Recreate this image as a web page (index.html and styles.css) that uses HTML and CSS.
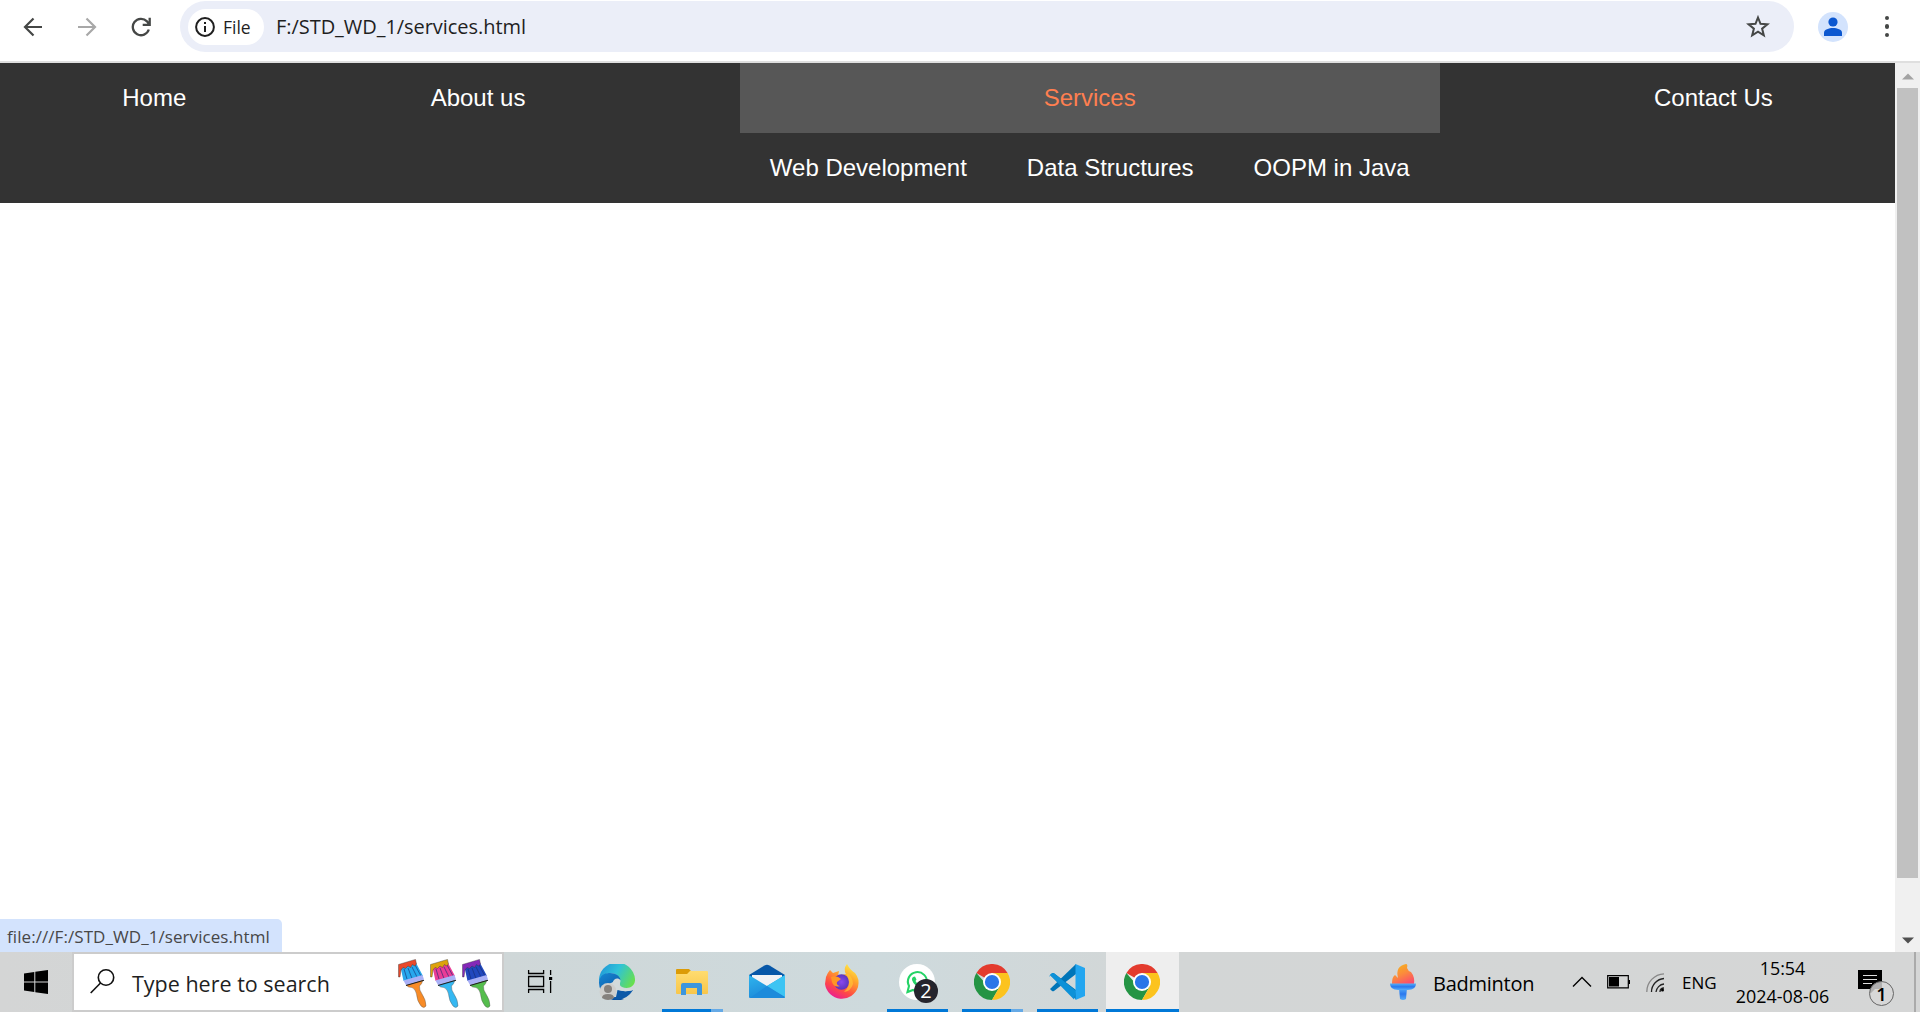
FILE: index.html
```html
<!DOCTYPE html>
<html lang="en">
<head>
<meta charset="utf-8">
<title>Services</title>
<link rel="stylesheet" href="styles.css">
</head>
<body>
<svg class="defs" width="0" height="0" aria-hidden="true">
  <defs>
    <linearGradient id="edgeTop" x1="0" y1="0.3" x2="1" y2="0.7"><stop offset="0" stop-color="#2298d8"/><stop offset=".45" stop-color="#2fc2d8"/><stop offset="1" stop-color="#68e04c"/></linearGradient>
    <linearGradient id="edgeMid" x1="0" y1="0" x2="0.6" y2="1"><stop offset="0" stop-color="#1688d4"/><stop offset="1" stop-color="#0a4f9e"/></linearGradient>
    <linearGradient id="folder" x1="0" y1="0" x2="0" y2="1"><stop offset="0" stop-color="#ffdc70"/><stop offset="1" stop-color="#f8c64a"/></linearGradient>
    <linearGradient id="mail" x1="0" y1="0" x2="0.5" y2="1"><stop offset="0" stop-color="#2fb5ee"/><stop offset="1" stop-color="#1c87d8"/></linearGradient>
    <linearGradient id="fox" x1="0.8" y1="0" x2="0.25" y2="1"><stop offset="0" stop-color="#fff04a"/><stop offset=".35" stop-color="#ffa42b"/><stop offset=".7" stop-color="#ff4b44"/><stop offset="1" stop-color="#e8189a"/></linearGradient>
    <radialGradient id="globe"><stop offset="0" stop-color="#8a48ef"/><stop offset="1" stop-color="#5b36bd"/></radialGradient>
    <linearGradient id="flame" x1="0.2" y1="0" x2="0.7" y2="1"><stop offset="0" stop-color="#f6b41c"/><stop offset=".5" stop-color="#fb8b3c"/><stop offset="1" stop-color="#fb4d6b"/></linearGradient>
    <linearGradient id="torch" x1="0" y1="0" x2="0" y2="1"><stop offset="0" stop-color="#55b0f7"/><stop offset=".5" stop-color="#2a78ee"/><stop offset="1" stop-color="#58aef8"/></linearGradient>
    <symbol id="chrome" viewBox="0 0 36 36">
      <path d="M18 18 2.400 9A18 18 0 0 1 33.600 9z" fill="#e33b2e"/>
      <path d="M18 18H10.200L2.400 9A18 18 0 0 0 18 36l7.800-13.500z" fill="#249444"/>
      <path d="M18 9H33.600A18 18 0 0 1 18 36l7.800-13.500z" fill="#fcc31e"/>
      <circle cx="18" cy="18" r="9" fill="#fff"/><circle cx="18" cy="18" r="7.100" fill="#2a76e8"/>
    </symbol>
    <symbol id="brush" viewBox="0 0 30 50">
      <path d="M8 26 25 21Q24 25 21.500 27 21 31 24 35 28 41 28 47 26 50 23 47 19 42 18.500 35 17.500 30 14 28.500 10 28.500 8 26z" class="handle" stroke="#555" stroke-width=".4"/>
      <path d="M2.500 8 17.500 3 25 17 5.500 22z" class="bristle"/>
      <path d="M6 10 9 20M10 9l4 10.500M14 8l5 10M17 6l6 11" stroke="#172c72" stroke-width="1" opacity=".6"/>
      <path d="M5.500 21.500 24.500 16 26 20.500 8 26z" fill="#a9b0f6"/><path d="M8 26.500 26 21.300" stroke="#222" stroke-width="1.100"/>
      <path d="M.5 5.500 17.500.4 18.500 5 16.500 7 14.500 5.500 12.500 8.500 10 7 7.500 9.500 5 8.500 3 11 2 18H.5z" class="paint"/>
    </symbol>
  </defs>
</svg>

<header class="toolbar">
  <svg class="tool back" viewBox="0 0 20 20" fill="none" stroke="#454746" stroke-width="2.200"><path d="M19 10H2M10.500 1.500 2 10l8.500 8.500"/></svg>
  <svg class="tool forward" viewBox="0 0 20 20" fill="none" stroke="#a8a8a8" stroke-width="2.200"><path d="M1 10h17M9.500 1.500 18 10l-8.500 8.500"/></svg>
  <svg class="tool reload" viewBox="0 0 20 20" fill="none" stroke="#454746" stroke-width="2.300"><path d="M17.800 12.500A8.200 8.200 0 1 1 16 4.400L18 7M18.700 .8v7h-7"/></svg>
  <div class="omnibox">
    <div class="chip">
      <svg width="20" height="20" viewBox="0 0 20 20"><circle cx="10" cy="10" r="8.900" fill="none" stroke="#1f1f1f" stroke-width="2"/><path d="M9 9h2v6H9zM9 5h2v2H9z" fill="#1f1f1f"/></svg>
      <span>File</span>
    </div>
    <span class="url">F:/STD_WD_1/services.html</span>
    <svg class="star" width="24" height="23" viewBox="0 0 24 23"><path d="m12 2.500 2.500 6.300 6.900.5-5.300 4.300 1.700 6.700-5.800-3.700-5.800 3.700 1.700-6.700-5.300-4.300 6.900-.5z" fill="none" stroke="#454746" stroke-width="2"/></svg>
  </div>
  <div class="avatar"><svg width="20" height="20" viewBox="0 0 20 20" fill="#0b57d0"><circle cx="10" cy="5" r="4.600"/><path d="M1 19v-3.500C1 12.500 6 11 10 11s9 1.500 9 4.500V19z"/></svg></div>
  <div class="dots"><i></i><i></i><i></i></div>
</header>

<main class="viewport">
  <div class="page">
    <ul class="menu">
      <li><a>Home</a></li>
      <li><a>About us</a></li>
      <li><a class="active">Services</a>
        <ul class="submenu"><li><a>Web Development</a></li><li><a>Data Structures</a></li><li><a>OOPM in Java</a></li></ul>
      </li>
      <li><a>Contact Us</a></li>
    </ul>
  </div>
  <div class="scrollbar">
    <svg width="12" height="7" viewBox="0 0 12 7"><path d="M0 6.500 6 .5l6 6z" fill="#a3a3a3"/></svg>
    <div class="thumb"></div>
    <svg width="12" height="7" viewBox="0 0 12 7"><path d="M0 .5h12l-6 6z" fill="#505050"/></svg>
  </div>
  <div class="status">file:///F:/STD_WD_1/services.html</div>
</main>

<footer class="taskbar">
  <div class="start"><svg width="24" height="24" viewBox="0 0 24 24"><path d="M0 3.400 10.300 2v9.500H0zM11.300 1.800 24 0v11.500H11.300zM0 12.500h10.300V22L0 20.600zM11.300 12.500H24V24l-12.700-1.800z"/></svg></div>
  <div class="search">
    <svg class="lens" width="25" height="25" viewBox="0 0 25 25" fill="none" stroke="#111" stroke-width="1.600"><circle cx="16" cy="8.500" r="7.700"/><path d="M10.500 14 .7 24"/></svg>
    <span class="prompt">Type here to search</span>
    <div class="brushes">
      <svg class="orange"><use href="#brush"/></svg><svg class="sky"><use href="#brush"/></svg><svg class="green"><use href="#brush"/></svg>
    </div>
  </div>
  <div class="apps">
    <div class="app"><svg class="taskview" viewBox="0 0 36 36" fill="none" stroke="#000" stroke-width="1.300"><path d="M4.600 6v3.500h15V6M4.600 29v-3.500h15V29M4.600 12.500h15v10h-15zM26.600 6v5M26.600 17v12"/><path d="M25 13h3.200v3H25z" fill="#000" stroke="none"/></svg></div>
    <div class="app"><svg viewBox="0 0 36 36">
      <path d="M0 18A18 18 0 0 1 36 15C36.500 23 29 25.500 23 23C20 21.500 21 20 21.500 17C21 12 16 8.500 10 9Q3 10 0 18z" fill="url(#edgeTop)"/>
      <path d="M0 18C1 11 6 8.500 11 9C17 9 21 12 21.500 16Q17 13 14 18C11 25 17 32 25 35A18 18 0 0 1 0 18z" fill="url(#edgeMid)"/>
      <path d="M15 19C15 26 24 29 34 26C30 33 22 37 15 35Q10 27 15 19z" fill="#0c59a8"/>
      <path d="M10 20Q12 19 14 18Q15 14 19 14.500Q21.500 15.500 21 18Q19.500 21 21 23Q26 26 33.500 24.500L33 26.500Q25 28 18.500 26L17 33H9z" fill="#d2dadb"/>
      <circle cx="9" cy="27.500" r="8.500" fill="#cfcfcd"/><circle cx="9" cy="25" r="4" fill="#85817d"/><path d="M3 34q0-4 6-4t6 4q-6 4-12 0z" fill="#85817d"/>
    </svg></div>
    <div class="app"><svg viewBox="0 0 36 36"><path d="M2 6q0-1 1-1h12l2 2-2 4H2z" fill="#dc9b06"/><path d="M2 10h11l3-3h17q1 0 1 1v21q0 1-1 1H3q-1 0-1-1z" fill="url(#folder)"/><path d="M7 31V21q0-2 2-2h17q2 0 2 2v10h-5v-7H12v7z" fill="#3c96de"/></svg><div class="bar"></div><div class="bar more"></div></div>
    <div class="app"><svg viewBox="0 0 36 36"><path d="M0 11 15.500 1.500q2.500-1.500 5 0L36 11v8H0z" fill="#0757a8"/><path d="M3 11h30v8L18 25 3 19z" fill="#f1f2f5"/><path d="M0 11 18 22 36 11v22q0 1-1 1H1q-1 0-1-1z" fill="url(#mail)"/><path d="M18 22 36 11v22z" fill="#3dc4f3"/><path d="m18 22 18 12H1z" fill="#1d8bdb"/></svg></div>
    <div class="app"><svg viewBox="0 0 36 36"><path d="M2 13Q4 8 6 6L9 9 15 7 14 12 22 10Q19 5 23 0Q26 6 31 9Q36 15 34 23A17 17 0 0 1 1 20z" fill="url(#fox)"/><circle cx="17.500" cy="18" r="7.700" fill="url(#globe)"/><path d="M7 13Q13 11 17 15L13 18Q12 21 16 22Q10 24 8 18z" fill="#ff9625"/><path d="M22 9Q29 12 29 20Q27 27 20 28Q27 22 24 14z" fill="#ffca35" opacity=".65"/></svg></div>
    <div class="app"><svg viewBox="0 0 40 40" class="whats"><circle cx="18" cy="18" r="18" fill="#fff"/><path d="m8.500 28 1.500-6A9.500 9.500 0 1 1 14 26z" fill="none" stroke="#24d366" stroke-width="2.100"/><path d="m14 13 2-.5 1.500 3-1 1.500q1.500 3 4 4l2-1.500 3 1.500q-1 3-3.500 3-7-2-9-8-.300-2 1-3z" fill="#24d366"/></svg><span class="count">2</span><div class="bar"></div></div>
    <div class="app"><svg><use href="#chrome"/></svg><div class="bar"></div><div class="bar more"></div></div>
    <div class="app"><svg viewBox="0 0 36 36"><path d="M1 11 3 9.200Q4 8.700 5 9.200L27 26v9.500Z" fill="#0075b8"/><path d="M1 25l2 2q1 .5 2 0L27 10V0Z" fill="#0075b8"/><path d="M1 11 25 35.500 27 27 5 9.300Q4 8.600 3 9.300L1 11Q0 12 1 13z" fill="#0d91d8"/><path d="M26.500 0 36 4v28l-9.500 4z" fill="#23a6f0"/></svg><div class="bar"></div></div>
    <div class="app current"><svg><use href="#chrome"/></svg><div class="bar"></div></div>
  </div>
  <div class="tray">
    <svg width="26" height="36" viewBox="0 0 26 36"><path d="M2 19Q2 13 5 11L8 14Q5 2 16 0Q18 0 17 4Q18 7 21 8Q25 13 24 20H2z" fill="url(#flame)"/><path d="M9 24h8l-1 11q-3 2-6 0z" fill="url(#torch)"/><path d="M0 19.500h26Q26 26 18 26H8Q0 26 0 19.500z" fill="url(#torch)"/></svg>
    <span class="news">Badminton</span>
    <svg class="up" width="20" height="12" viewBox="0 0 20 12"><path d="m1 10.500 9-9 9 9" fill="none" stroke="#000" stroke-width="1.400"/></svg>
    <svg class="battery" width="24" height="14" viewBox="0 0 24 14"><path d="M.7.700h20.600v12.100H.7z" fill="none" stroke="#000" stroke-width="1.200"/><path d="M2 2h10v9.500H2zM21.500 5H23v4h-1.500z"/></svg>
    <svg class="wifi" width="19" height="19" viewBox="0 0 19 19" fill="none" stroke="#222" stroke-width="1.300"><path d="M.8 19A18 18 0 0 1 18 .8" stroke="#888"/><path d="M5.500 19A13.500 13.500 0 0 1 18 5.500M10 19a9 9 0 0 1 8-8M14 19q0-4 4-4"/><circle cx="16.500" cy="17" r="1.500" fill="#000" stroke="none"/></svg>
    <span class="lang">ENG</span>
    <div class="clock"><span>15:54</span><span class="date">2024-08-06</span></div>
    <div class="notice"><svg width="24" height="25" viewBox="0 0 24 25"><path d="M0 0h24v19h-7l-5 5v-5H0z"/><path d="M5 5.500h14M5 9.500h14M5 13.500h9" stroke="#ddd" stroke-width="1"/></svg><span class="badge">1</span></div>
    <div class="desktop"></div>
  </div>
</footer>
</body>
</html>
```
FILE: styles.css
```css
* { box-sizing: border-box; }
body { margin: 0; width: 1920px; height: 1012px; overflow: hidden; display: flex; flex-direction: column; background: #fff; font-family: "Open Sans", sans-serif; color: #1f1f1f; }
svg { display: block; flex: none; }
.defs { position: absolute; }

.toolbar { height: 63px; flex: none; display: flex; align-items: flex-start; padding: 1px 0 0 23px; border-bottom: 2px solid #dfdfdf; }
.tool { width: 20px; height: 20px; margin-top: 15.5px; }
.forward { margin-left: 34px; }
.reload { margin-left: 34px; }
.omnibox { width: 1614px; height: 51px; margin-left: 29px; border-radius: 26px; background: #ebeef8; display: flex; align-items: center; padding-left: 8px; }
.chip { width: 76px; height: 36px; border-radius: 18px; background: #fff; display: flex; align-items: center; padding-left: 7px; gap: 8px; font-size: 17.5px; font-weight: 500; }
.url { margin-left: 12px; font-size: 20px; letter-spacing: -0.05px; white-space: nowrap; }
.star { margin-left: auto; margin-right: 24px; }
.avatar { width: 30px; height: 30px; margin: 11px 0 0 24px; border-radius: 50%; background: #d3e3fd; display: flex; align-items: center; justify-content: center; }
.dots { margin: 15px 0 0 37px; display: flex; flex-direction: column; gap: 4px; }
.dots i { width: 4.4px; height: 4.4px; border-radius: 50%; background: #454746; }

.viewport { height: 889px; flex: none; display: flex; position: relative; }
.page { width: 1895px; }
.menu, .submenu { margin: 0; padding: 0; list-style: none; display: flex; background: #333; }
.menu { justify-content: space-around; font: 24px/70px "Liberation Sans", Arial, sans-serif; color: #fff; }
.menu a { display: block; padding: 0 30px; height: 70px; text-align: center; white-space: nowrap; }
.menu .active { background: #575757; color: #ff7f50; }
.scrollbar { width: 25px; background: #f0f0f0; display: flex; flex-direction: column; align-items: center; padding: 10px 0 8px; }
.thumb { width: 21px; height: 790px; margin: 8px 0 auto; background: #c1c1c1; }
.status { position: absolute; left: 0; bottom: 0; width: 282px; height: 33px; padding-left: 7px; border-radius: 0 5px 0 0; background: #d3e3fd; color: #474747; font-size: 17px; line-height: 35px; letter-spacing: 0.07px; white-space: nowrap; }

.taskbar { height: 60px; flex: none; display: flex; background: linear-gradient(90deg, #d4d5d5 0, #cfd7d8 504px, #cedadd 880px, #d3d6d6 1180px, #d5d6d6 100%); }
.start { width: 72px; padding: 18px 0 0 24px; }
.search { width: 432px; border: 2px solid #ccc; background: #fff; display: flex; align-items: center; padding-left: 16px; font-size: 21.5px; white-space: nowrap; }
.lens { margin: -1px 17px 0 0; }
.prompt { padding-top: 2px; }
.brushes { margin: 4px 10px 0 auto; display: flex; gap: 2px; }
.brushes svg { width: 30px; height: 50px; }
.orange { --paint: #e8492b; --bristle: #27a8ed; --handle: #f88b26; }
.sky { --paint: #dda20c; --bristle: #e93c97; --handle: #35b8f2; }
.green { --paint: #8528b8; --bristle: #2148bd; --handle: #55bd4d; }
.paint { fill: var(--paint); stroke: #333; stroke-width: .4; }
.bristle { fill: var(--bristle); }
.handle { fill: var(--handle); }
.apps { display: grid; grid-template-columns: repeat(9, 75px); }
.app { position: relative; padding: 12px 0 0 20px; }
.app > svg { width: 36px; height: 36px; }
.app .whats { width: 40px; height: 40px; }
.bar { position: absolute; left: 8px; right: 6px; bottom: 0; height: 3px; background: #0078d7; }
.bar.more { left: 57px; background: #66aae6; }
.current { margin-left: 2px; padding-left: 18px; background: #eee; }
.current .bar { left: 0; right: 0; }
.count { position: absolute; left: 35px; top: 27px; width: 24px; height: 24px; border-radius: 50%; background: #25252d; color: #fff; font-size: 20px; line-height: 23px; text-align: center; }
.tray { width: 530px; margin-left: auto; display: flex; align-items: center; color: #000; white-space: nowrap; }
.news { width: 139px; padding: 2px 0 0 17px; font-size: 20px; letter-spacing: -0.25px; }
.up { margin-left: 17px; }
.battery { margin-left: 15px; }
.wifi { margin-left: 15px; }
.lang { width: 52px; padding-left: 17px; font-size: 17px; }
.clock { width: 131px; display: flex; flex-direction: column; align-items: center; font-size: 17.9px; line-height: 28px; }
.notice { position: relative; width: 56px; height: 25px; margin-left: 10px; }
.badge { position: absolute; left: 11px; top: 11px; width: 25px; height: 25px; border: 1px solid #666; border-radius: 50%; background: rgba(215,215,215,.82); font-size: 18.5px; font-weight: 600; line-height: 23px; text-align: center; }
.desktop { width: 2px; height: 60px; background: #aaa; }
```
